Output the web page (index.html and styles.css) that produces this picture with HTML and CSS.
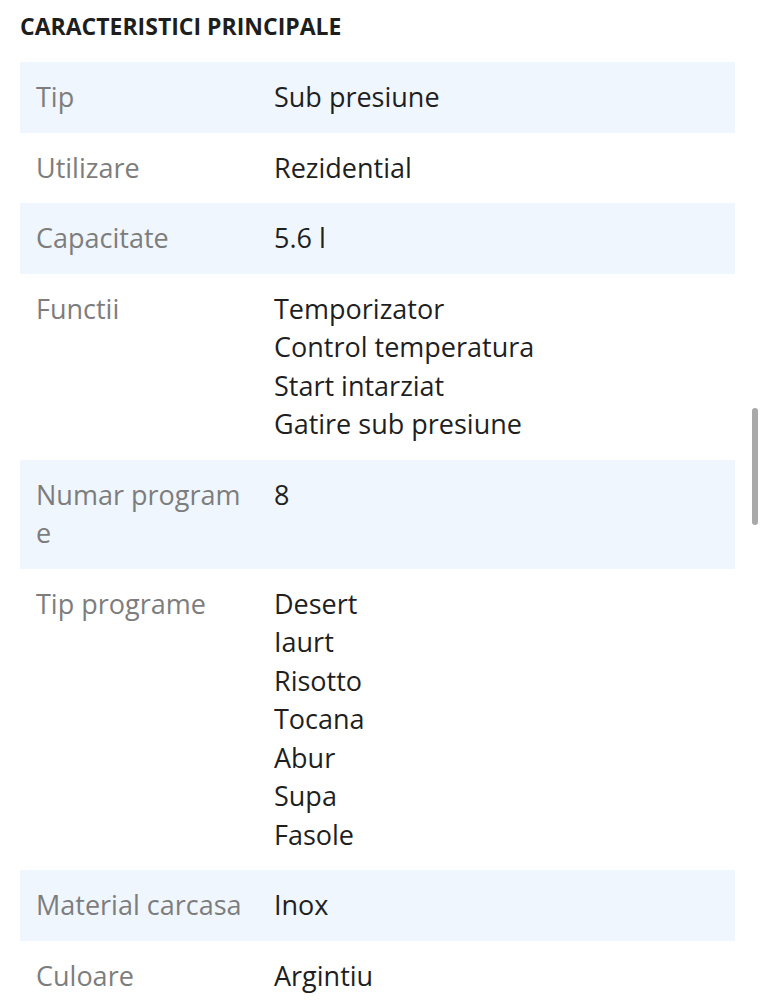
FILE: index.html
```html
<!DOCTYPE html>
<html lang="ro">
<head>
<meta charset="utf-8">
<title>Caracteristici principale</title>
<link rel="stylesheet" href="styles.css">
</head>
<body>
<div class="page">
  <h2 class="title">CARACTERISTICI PRINCIPALE</h2>
  <div class="specs">
    <div class="row alt"><div class="label">Tip</div><div class="value">Sub presiune</div></div>
    <div class="row"><div class="label">Utilizare</div><div class="value">Rezidential</div></div>
    <div class="row alt"><div class="label">Capacitate</div><div class="value">5.6 l</div></div>
    <div class="row"><div class="label">Functii</div><div class="value">Temporizator<br>Control temperatura<br>Start intarziat<br>Gatire sub presiune</div></div>
    <div class="row alt"><div class="label">Numar programe</div><div class="value">8</div></div>
    <div class="row"><div class="label">Tip programe</div><div class="value">Desert<br>Iaurt<br>Risotto<br>Tocana<br>Abur<br>Supa<br>Fasole</div></div>
    <div class="row alt"><div class="label">Material carcasa</div><div class="value">Inox</div></div>
    <div class="row"><div class="label">Culoare</div><div class="value">Argintiu</div></div>
  </div>
</div>
<div class="scrollbar"></div>
</body>
</html>
```
FILE: styles.css
```css
html, body {
  margin: 0;
  padding: 0;
  background: #ffffff;
  overflow: hidden;
}
body {
  font-family: "Open Sans", "Noto Sans", sans-serif;
  color: #222222;
}
.page {
  padding: 0 29px 0 20px;
}
.title {
  margin: 0;
  padding-top: 10px;
  height: 62px;
  box-sizing: border-box;
  font-size: 23px;
  font-weight: 700;
  line-height: 32px;
  color: #1e1e1e;
}
.specs {
  display: flex;
  flex-direction: column;
}
.row {
  display: grid;
  grid-template-columns: 254px 1fr;
  padding: 16px 0;
  font-size: 27px;
  line-height: 38.5px;
}
.row.alt {
  background: #f0f6fd;
}
.label {
  padding: 0 28px 0 16px;
  color: #7d7d7d;
  word-break: break-all;
}
.value {
  color: #1f1f1f;
}
.scrollbar {
  position: fixed;
  left: 752px;
  top: 408px;
  width: 6px;
  height: 117px;
  border-radius: 3px;
  background: #a9a9a9;
}
```
